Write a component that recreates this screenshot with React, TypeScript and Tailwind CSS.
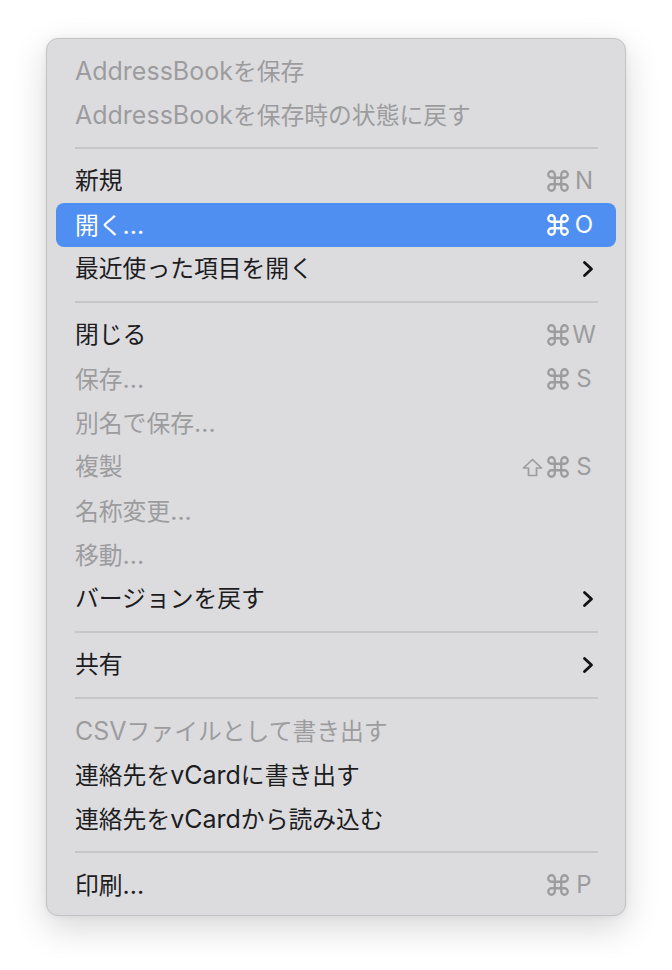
import React from "react";

type Item =
  | { kind: "sep" }
  | {
      kind: "item";
      label: string;
      disabled?: boolean;
      highlighted?: boolean;
      shift?: boolean;
      keyChar?: string;
      submenu?: boolean;
    };

const items: Item[] = [
  { kind: "item", label: "AddressBookを保存", disabled: true },
  { kind: "item", label: "AddressBookを保存時の状態に戻す", disabled: true },
  { kind: "sep" },
  { kind: "item", label: "新規", keyChar: "N" },
  { kind: "item", label: "開く...", keyChar: "O", highlighted: true },
  { kind: "item", label: "最近使った項目を開く", submenu: true },
  { kind: "sep" },
  { kind: "item", label: "閉じる", keyChar: "W" },
  { kind: "item", label: "保存...", disabled: true, keyChar: "S" },
  { kind: "item", label: "別名で保存...", disabled: true },
  { kind: "item", label: "複製", disabled: true, shift: true, keyChar: "S" },
  { kind: "item", label: "名称変更...", disabled: true },
  { kind: "item", label: "移動...", disabled: true },
  { kind: "item", label: "バージョンを戻す", submenu: true },
  { kind: "sep" },
  { kind: "item", label: "共有", submenu: true },
  { kind: "sep" },
  { kind: "item", label: "CSVファイルとして書き出す", disabled: true },
  { kind: "item", label: "連絡先をvCardに書き出す" },
  { kind: "item", label: "連絡先をvCardから読み込む" },
  { kind: "sep" },
  { kind: "item", label: "印刷...", keyChar: "P" },
];

function Chevron() {
  return (
    <svg width="12" height="18" viewBox="0 0 12 18" className="block">
      <polyline
        points="2.5,2.5 9.5,9 2.5,15.5"
        fill="none"
        stroke="#111"
        strokeWidth="2.8"
        strokeLinecap="round"
        strokeLinejoin="round"
      />
    </svg>
  );
}

function CmdIcon() {
  return (
    <svg width="26" height="26" viewBox="0 0 24 24" className="block -mr-[3px]">
      <path
        d="M15 6v12a3 3 0 1 0 3-3H6a3 3 0 1 0 3 3V6a3 3 0 1 0-3 3h12a3 3 0 1 0-3-3"
        fill="none"
        stroke="currentColor"
        strokeWidth="2.1"
        strokeLinecap="round"
        strokeLinejoin="round"
      />
    </svg>
  );
}

function ShiftIcon() {
  return (
    <svg width="21" height="19" viewBox="0 0 21 19" className="block">
      <path
        d="M10.5 1.5 L19.5 10 H14.5 V17.5 H6.5 V10 H1.5 Z"
        fill="none"
        stroke="currentColor"
        strokeWidth="1.7"
        strokeLinejoin="round"
      />
    </svg>
  );
}

function Label({ text }: { text: string }) {
  const parts = text.split(/([A-Za-z0-9.]+)/).filter((p) => p.length > 0);
  return (
    <>
      {parts.map((p, i) =>
        /^[A-Za-z0-9.]+$/.test(p) ? (
          <span key={i} className="text-[25px]">
            {p}
          </span>
        ) : (
          <span key={i}>{p}</span>
        )
      )}
    </>
  );
}

export default function App() {
  return (
    <div className="w-[672px] h-[970px] bg-white pt-[38px] pl-[46px]">
      <div
        className="w-[580px] rounded-[12px] border border-[#c2c2c4] bg-[#dcdcdf] px-[9px] pt-[10px] pb-[8px] shadow-[0_12px_34px_rgba(0,0,0,0.16),0_0_6px_rgba(0,0,0,0.06)]"
        style={{ fontFamily: '"Inter", "Noto Sans CJK JP", sans-serif' }}
      >
        {items.map((it, i) => {
          if (it.kind === "sep") {
            return (
              <div key={i} className="h-[22px] flex items-center pl-[19px] pr-[18px]">
                <div className="h-[2px] w-full bg-[#c6c6c8]" />
              </div>
            );
          }
          const textColor = it.highlighted
            ? "text-white"
            : it.disabled
            ? "text-[#9c9c9e]"
            : "text-[#1d1d1f]";
          const scColor = it.highlighted ? "text-white" : "text-[#9c9c9e]";
          return (
            <div
              key={i}
              className={`h-[44px] flex items-center pl-[19px] pr-[16px] rounded-[8px] ${
                it.highlighted ? "bg-[#4f8ff2]" : ""
              }`}
            >
              <span className={`flex-1 text-[23.8px] leading-none whitespace-nowrap ${textColor}`}>
                <Label text={it.label} />
              </span>
              {it.keyChar && (
                <span className={`flex items-center ${scColor}`}>
                  {it.shift && (
                    <span className="mr-[2px]">
                      <ShiftIcon />
                    </span>
                  )}
                  <CmdIcon />
                  <span className="w-[32px] text-center text-[24px] leading-none">{it.keyChar}</span>
                </span>
              )}
              {it.submenu && (
                <span className="pr-[6px]">
                  <Chevron />
                </span>
              )}
            </div>
          );
        })}
      </div>
    </div>
  );
}
